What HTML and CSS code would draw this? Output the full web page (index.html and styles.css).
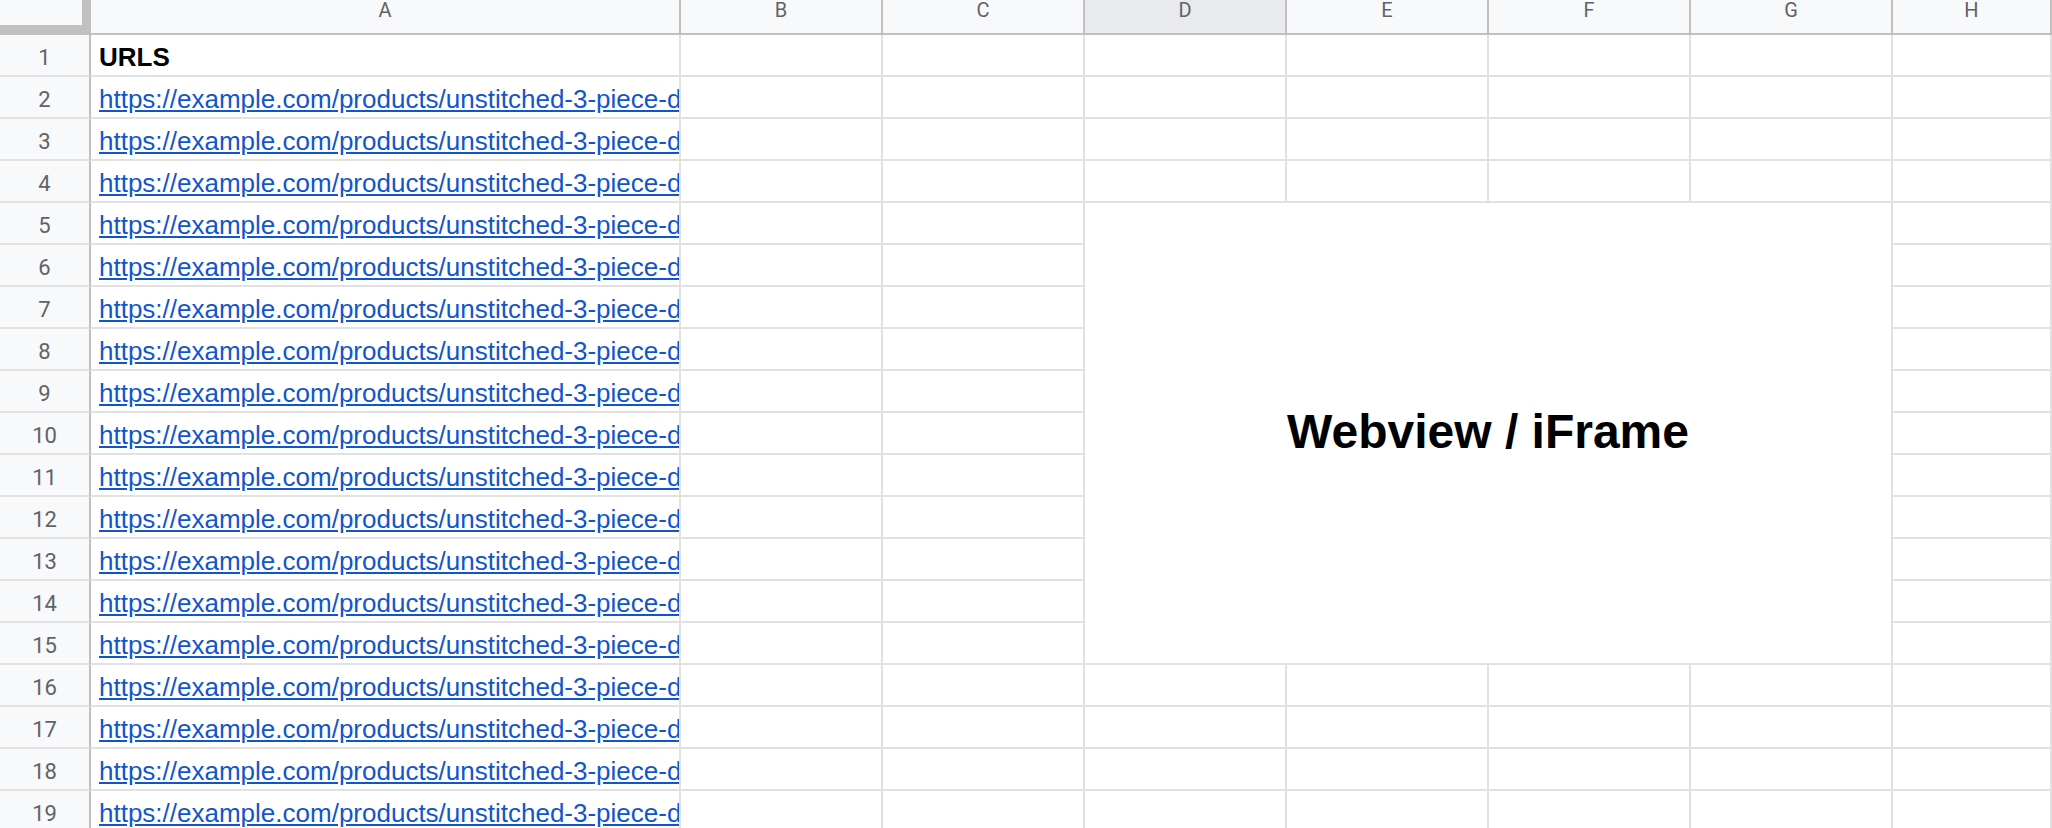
FILE: index.html
```html
<!DOCTYPE html>
<html lang="en">
<head>
  <meta charset="UTF-8" />
  <title>URLS - Sheet</title>
  <link rel="stylesheet" href="styles.css">
</head>
<body>
  <div class="sheet">
    <!-- column headers -->
    <div class="corner"></div>
    <div class="col">A</div>
    <div class="col">B</div>
    <div class="col">C</div>
    <div class="col active">D</div>
    <div class="col">E</div>
    <div class="col">F</div>
    <div class="col">G</div>
    <div class="col">H</div>

    <!-- merged D5:G15 -->
    <div class="frame">Webview / iFrame</div>

    <div class="num">1</div>
    <div class="cell bold">URLS</div>
    <div class="cell"></div><div class="cell"></div><div class="cell"></div><div class="cell"></div><div class="cell"></div><div class="cell"></div><div class="cell"></div>

    <div class="num">2</div>
    <div class="cell"><a class="link" href="#">https://example.com/products/unstitched-3-piece-dress</a></div>
    <div class="cell"></div><div class="cell"></div><div class="cell"></div><div class="cell"></div><div class="cell"></div><div class="cell"></div><div class="cell"></div>

    <div class="num">3</div>
    <div class="cell"><a class="link" href="#">https://example.com/products/unstitched-3-piece-dress</a></div>
    <div class="cell"></div><div class="cell"></div><div class="cell"></div><div class="cell"></div><div class="cell"></div><div class="cell"></div><div class="cell"></div>

    <div class="num">4</div>
    <div class="cell"><a class="link" href="#">https://example.com/products/unstitched-3-piece-dress</a></div>
    <div class="cell"></div><div class="cell"></div><div class="cell"></div><div class="cell"></div><div class="cell"></div><div class="cell"></div><div class="cell"></div>

    <div class="num">5</div>
    <div class="cell"><a class="link" href="#">https://example.com/products/unstitched-3-piece-dress</a></div>
    <div class="cell"></div><div class="cell"></div><div class="cell"></div>

    <div class="num">6</div>
    <div class="cell"><a class="link" href="#">https://example.com/products/unstitched-3-piece-dress</a></div>
    <div class="cell"></div><div class="cell"></div><div class="cell"></div>

    <div class="num">7</div>
    <div class="cell"><a class="link" href="#">https://example.com/products/unstitched-3-piece-dress</a></div>
    <div class="cell"></div><div class="cell"></div><div class="cell"></div>

    <div class="num">8</div>
    <div class="cell"><a class="link" href="#">https://example.com/products/unstitched-3-piece-dress</a></div>
    <div class="cell"></div><div class="cell"></div><div class="cell"></div>

    <div class="num">9</div>
    <div class="cell"><a class="link" href="#">https://example.com/products/unstitched-3-piece-dress</a></div>
    <div class="cell"></div><div class="cell"></div><div class="cell"></div>

    <div class="num">10</div>
    <div class="cell"><a class="link" href="#">https://example.com/products/unstitched-3-piece-dress</a></div>
    <div class="cell"></div><div class="cell"></div><div class="cell"></div>

    <div class="num">11</div>
    <div class="cell"><a class="link" href="#">https://example.com/products/unstitched-3-piece-dress</a></div>
    <div class="cell"></div><div class="cell"></div><div class="cell"></div>

    <div class="num">12</div>
    <div class="cell"><a class="link" href="#">https://example.com/products/unstitched-3-piece-dress</a></div>
    <div class="cell"></div><div class="cell"></div><div class="cell"></div>

    <div class="num">13</div>
    <div class="cell"><a class="link" href="#">https://example.com/products/unstitched-3-piece-dress</a></div>
    <div class="cell"></div><div class="cell"></div><div class="cell"></div>

    <div class="num">14</div>
    <div class="cell"><a class="link" href="#">https://example.com/products/unstitched-3-piece-dress</a></div>
    <div class="cell"></div><div class="cell"></div><div class="cell"></div>

    <div class="num">15</div>
    <div class="cell"><a class="link" href="#">https://example.com/products/unstitched-3-piece-dress</a></div>
    <div class="cell"></div><div class="cell"></div><div class="cell"></div>

    <div class="num">16</div>
    <div class="cell"><a class="link" href="#">https://example.com/products/unstitched-3-piece-dress</a></div>
    <div class="cell"></div><div class="cell"></div><div class="cell"></div><div class="cell"></div><div class="cell"></div><div class="cell"></div><div class="cell"></div>

    <div class="num">17</div>
    <div class="cell"><a class="link" href="#">https://example.com/products/unstitched-3-piece-dress</a></div>
    <div class="cell"></div><div class="cell"></div><div class="cell"></div><div class="cell"></div><div class="cell"></div><div class="cell"></div><div class="cell"></div>

    <div class="num">18</div>
    <div class="cell"><a class="link" href="#">https://example.com/products/unstitched-3-piece-dress</a></div>
    <div class="cell"></div><div class="cell"></div><div class="cell"></div><div class="cell"></div><div class="cell"></div><div class="cell"></div><div class="cell"></div>

    <div class="num">19</div>
    <div class="cell"><a class="link" href="#">https://example.com/products/unstitched-3-piece-dress</a></div>
    <div class="cell"></div><div class="cell"></div><div class="cell"></div><div class="cell"></div><div class="cell"></div><div class="cell"></div><div class="cell"></div>
  </div>
</body>
</html>
```

FILE: styles.css
```css
* {
  margin: 0; padding: 0; box-sizing: border-box;
}
body {
  background-color: #fff;
  font-family: "Liberation Sans", Arial, sans-serif;
  overflow: hidden;
}

.sheet {
  display: grid;
  width: 2052px;
  grid-template-columns: 91px 590px repeat(6, 202px) 1fr;
  grid-template-rows: 35px repeat(19, 42px);
}

/* headers */
.corner {
  background-color: #f8f9fa;
  border-right: 9px solid #c0c0c0;
  border-bottom: 10px solid #c0c0c0;
}
.col {
  background-color: #f8f9fa;
  border-right: 2px solid #c0c0c0;
  border-bottom: 2px solid #c0c0c0;
  font-family: Roboto, sans-serif;
  font-size: 20px;
  line-height: 21px;
  color: #5f6368;
  text-align: center;
}
.col.active {
  background-color: #e8eaed;
}
.num {
  background-color: #f8f9fa;
  border-right: 2px solid #c0c0c0;
  border-bottom: 2px solid #e1e1e1;
  display: flex;
  align-items: flex-end;
  justify-content: center;
  padding-bottom: 6px;
  font-family: Roboto, sans-serif;
  font-size: 22px;
  line-height: 22px;
  color: #5f6368;
}

/* cells */
.cell {
  border-right: 2px solid #e1e1e1;
  border-bottom: 2px solid #e1e1e1;
  display: flex;
  align-items: flex-end;
  padding: 0 8px 5px;
  font-size: 26px;
  line-height: 26px;
  white-space: nowrap;
  overflow: hidden;
  color: #000;
}
.cell.bold {
  font-weight: bold;
}
.link {
  color: #1155cc;
  text-decoration: underline;
}

.frame {
  grid-column: 5 / 9;
  grid-row: 6 / 17;
  background-color: #fff;
  border-right: 2px solid #e1e1e1;
  border-bottom: 2px solid #e1e1e1;
  display: flex;
  align-items: center;
  justify-content: center;
  padding-bottom: 3px;
  font-size: 48px;
  font-weight: bold;
  color: #000;
}
```
